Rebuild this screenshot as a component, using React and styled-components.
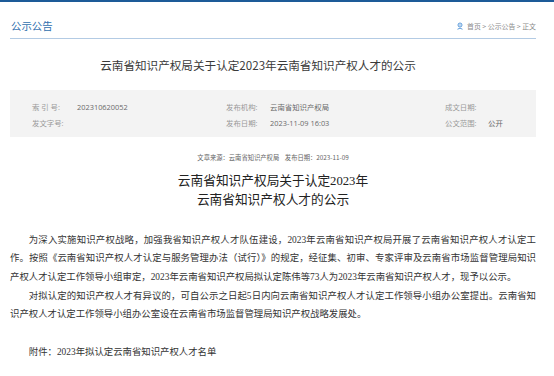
import styled, { createGlobalStyle } from 'styled-components';

const GlobalStyle = createGlobalStyle`
  html, body {
    margin: 0;
    padding: 0;
    background: #fff;
  }
  body {
    font-family: 'Noto Sans CJK SC', sans-serif;
    color: #333;
  }
`;

const TopBar = styled.div`
  height: 2px;
  background-color: #1d5b98;
`;

const Page = styled.div`
  margin: 0 18px 0 10px;
`;

const Header = styled.div`
  display: flex;
  justify-content: space-between;
  align-items: center;
  padding: 14px 0 2px;
  line-height: 20px;
  border-bottom: 1px solid #b3cbe4;
`;

const Section = styled.h2`
  margin: 0 0 0 1px;
  font-size: 10.4px;
  font-weight: 400;
  color: #2f6fae;
`;

const Crumbs = styled.div`
  display: flex;
  align-items: center;
  gap: 3px;
  font-size: 6.9px;
  color: #8a8a8a;
  white-space: pre;
`;

const Title = styled.h1`
  margin: 16px 30px 0 0;
  font-size: 11.6px;
  line-height: 20px;
  font-weight: 400;
  text-align: center;
  color: #3a3a3a;
`;

const InfoBox = styled.div`
  margin-top: 15px;
  padding: 9px 0 6px 22px;
  background-color: #f3f3f3;
  display: grid;
  grid-template-columns: 194px 219px 1fr;
  font-family: 'Open Sans', 'Noto Sans CJK SC', sans-serif;
  font-size: 7.4px;
  line-height: 16px;
`;

const InfoItem = styled.div`
  display: flex;
`;

const InfoLabel = styled.span`
  width: ${(props) => props.w || 44}px;
  color: #9a9a9a;
  white-space: pre;
`;

const InfoValue = styled.span`
  color: #6a6a6a;
`;

const Meta = styled.div`
  margin-top: 15px;
  font-size: 6.3px;
  line-height: 12px;
  color: #666;
  text-align: center;
  white-space: pre;
`;

const ArticleTitle = styled.h1`
  margin: 7.5px 0 0;
  font-family: 'Liberation Serif', 'Noto Sans CJK SC', serif;
  font-size: 12.7px;
  line-height: 19px;
  font-weight: 400;
  text-align: center;
  color: #222;
`;

const Body = styled.div`
  margin-top: 21px;
  font-family: 'Liberation Serif', 'Noto Sans CJK SC', serif;
  font-size: 9.4px;
  line-height: 18.7px;
  color: #333;
`;

const Para = styled.p`
  margin: 0;
  text-indent: 2em;
  text-align: justify;
`;

const Attachment = styled.p`
  margin: 18.7px 0 0;
  text-indent: 2em;
`;

function PinIcon() {
  return (
    <svg width="8" height="8" viewBox="0 0 16 16" fill="none" stroke="#4a8fd6" strokeWidth="1.8">
      <circle cx="8" cy="6" r="4" />
      <circle cx="8" cy="6" r="1.4" fill="#4a8fd6" stroke="none" />
      <path d="M3 14.5 Q8 10 13 14.5" />
    </svg>
  );
}

export default function App() {
  return (
    <>
      <GlobalStyle />
      <TopBar />
      <Page>
        <Header>
          <Section>公示公告</Section>
          <Crumbs>
            <PinIcon />
            <span>首页 &gt; 公示公告 &gt; 正文</span>
          </Crumbs>
        </Header>

        <Title>云南省知识产权局关于认定2023年云南省知识产权人才的公示</Title>

        <InfoBox>
          <InfoItem>
            <InfoLabel w={45}>索 引 号:</InfoLabel>
            <InfoValue>202310620052</InfoValue>
          </InfoItem>
          <InfoItem>
            <InfoLabel>发布机构:</InfoLabel>
            <InfoValue>云南省知识产权局</InfoValue>
          </InfoItem>
          <InfoItem>
            <InfoLabel w={43}>成文日期:</InfoLabel>
            <InfoValue></InfoValue>
          </InfoItem>
          <InfoItem>
            <InfoLabel w={45}>发文字号:</InfoLabel>
            <InfoValue></InfoValue>
          </InfoItem>
          <InfoItem>
            <InfoLabel>发布日期:</InfoLabel>
            <InfoValue>2023-11-09 16:03</InfoValue>
          </InfoItem>
          <InfoItem>
            <InfoLabel w={43}>公文范围:</InfoLabel>
            <InfoValue>公开</InfoValue>
          </InfoItem>
        </InfoBox>

        <Meta>文章来源：云南省知识产权局    发布日期：2023-11-09</Meta>

        <ArticleTitle>
          云南省知识产权局关于认定2023年
          <br />
          云南省知识产权人才的公示
        </ArticleTitle>

        <Body>
          <Para>
            为深入实施知识产权战略，加强我省知识产权人才队伍建设，2023年云南省知识产权局开展了云南省知识产权人才认定工作。按照《云南省知识产权人才认定与服务管理办法（试行）》的规定，经征集、初审、专家评审及云南省市场监督管理局知识产权人才认定工作领导小组审定，2023年云南省知识产权局拟认定陈伟等73人为2023年云南省知识产权人才，现予以公示。
          </Para>
          <Para>
            对拟认定的知识产权人才有异议的，可自公示之日起5日内向云南省知识产权人才认定工作领导小组办公室提出。云南省知识产权人才认定工作领导小组办公室设在云南省市场监督管理局知识产权战略发展处。
          </Para>
          <Attachment>附件：2023年拟认定云南省知识产权人才名单</Attachment>
        </Body>
      </Page>
    </>
  );
}
